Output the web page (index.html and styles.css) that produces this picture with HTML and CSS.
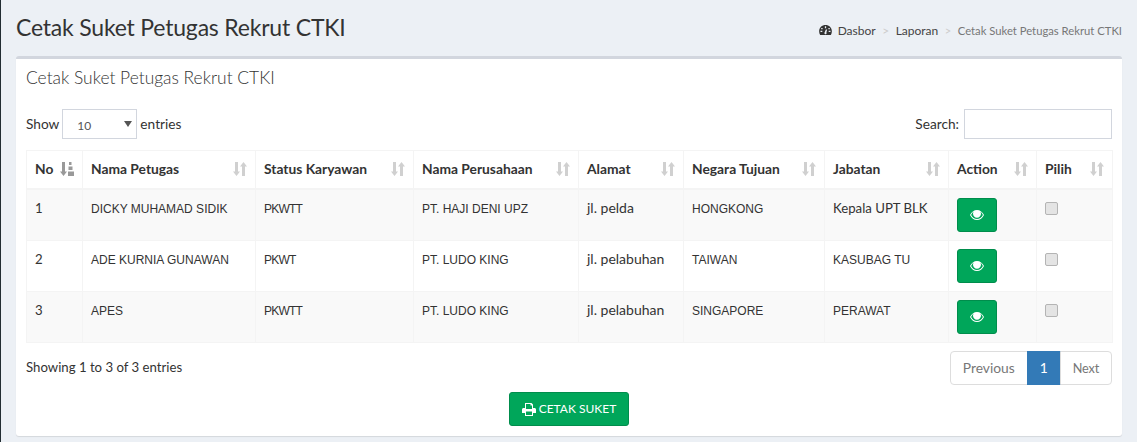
FILE: index.html
```html
<!DOCTYPE html>
<html lang="en">
<head>
    <meta charset="UTF-8">
    <meta name="viewport" content="width=device-width, initial-scale=1.0">
    <title>Cetak Suket Petugas Rekrut CTKI</title>
    <link rel="stylesheet" href="styles.css">
</head>
<body>
    <svg class="defs" width="0" height="0">
        <symbol id="sort" viewBox="0 0 14 14">
            <path d="M2 0h3v9.500h2L3.500 14 0 9.500h2z"/>
            <path d="M10.500 0L14 4.500h-2V14H9V4.500H7z"/>
        </symbol>
        <symbol id="sort-asc" viewBox="0 0 14 14">
            <path d="M2 0h3v9.500h2L3.500 14 0 9.500h2z"/>
            <path d="M9 0h2.500v3H9zM8.500 4.500h4v3.500h-4zM8 9.500h6V14H8z"/>
        </symbol>
        <symbol id="eye" viewBox="0 0 14 10">
            <path fill-rule="evenodd" d="M7 0c3 0 5.600 2 7 5-1.400 3-4 5-7 5S1.400 8 0 5c1.400-3 4-5 7-5zM3.600 1.700C2.500 2.400 1.700 3.600 1.100 5c1.300 2.500 3.400 4 5.900 4s4.600-1.500 5.900-4c-.6-1.400-1.400-2.600-2.500-3.300.4.600.6 1.300.6 2 0 2.200-1.800 4-4 4s-4-1.800-4-4c0-.7.200-1.400.6-2z"/>
        </symbol>
    </svg>

    <div class="wrapper">
        <header class="page-header">
            <h1>Cetak Suket Petugas Rekrut CTKI</h1>
            <ol class="breadcrumb">
                <li>
                    <svg class="icon-dash" viewBox="0 0 14 11"><path fill-rule="evenodd" d="M7 0c3.900 0 7 3 7 7 0 1.500-.4 2.900-1.100 4H1.100C.4 9.900 0 8.500 0 7c0-4 3.100-7 7-7zM6.300 1.500v2h1.400v-2zM2.300 3.300v1.500h1.500V3.300zM10.200 3.300v1.500h1.500V3.300zM1.500 6.300v1.400h2V6.300zM10.500 6.300v1.400h2V6.300zM6 8.200a1.200 1.200 0 1 0 2 0l.8-3.200h-1.400z"/></svg>
                    <a href="#">Dasbor</a>
                </li>
                <li><a href="#">Laporan</a></li>
                <li class="active">Cetak Suket Petugas Rekrut CTKI</li>
            </ol>
        </header>

        <section class="box">
            <h3 class="box-title">Cetak Suket Petugas Rekrut CTKI</h3>
            <div class="box-body">
                <div class="table-controls">
                    <label class="control">Show
                        <span class="select-wrap">
                            <select>
                                <option>10</option>
                                <option>25</option>
                            </select>
                        </span>
                        entries</label>
                    <label class="control control-search">Search: <input type="search"></label>
                </div>

                <table class="data-table">
                    <colgroup>
                        <col class="c-no"><col class="c-nama"><col class="c-status"><col class="c-pt">
                        <col class="c-alamat"><col class="c-negara"><col class="c-jabatan"><col class="c-action"><col class="c-pilih">
                    </colgroup>
                    <thead>
                        <tr>
                            <th><div class="th-inner">No <svg class="sort-icon sort-active"><use href="#sort-asc"/></svg></div></th>
                            <th><div class="th-inner">Nama Petugas <svg class="sort-icon"><use href="#sort"/></svg></div></th>
                            <th><div class="th-inner">Status Karyawan <svg class="sort-icon"><use href="#sort"/></svg></div></th>
                            <th><div class="th-inner">Nama Perusahaan <svg class="sort-icon"><use href="#sort"/></svg></div></th>
                            <th><div class="th-inner">Alamat <svg class="sort-icon"><use href="#sort"/></svg></div></th>
                            <th><div class="th-inner">Negara Tujuan <svg class="sort-icon"><use href="#sort"/></svg></div></th>
                            <th><div class="th-inner">Jabatan <svg class="sort-icon"><use href="#sort"/></svg></div></th>
                            <th><div class="th-inner">Action <svg class="sort-icon"><use href="#sort"/></svg></div></th>
                            <th><div class="th-inner">Pilih <svg class="sort-icon"><use href="#sort"/></svg></div></th>
                        </tr>
                    </thead>
                    <tbody>
                        <tr>
                            <td class="mixed">1</td>
                            <td>DICKY MUHAMAD SIDIK</td>
                            <td class="tight">PKWTT</td>
                            <td>PT. HAJI DENI UPZ</td>
                            <td class="lower">jl. pelda</td>
                            <td>HONGKONG</td>
                            <td class="mixed">Kepala UPT BLK</td>
                            <td><a class="btn btn-eye" href="#"><svg class="icon-eye"><use href="#eye"/></svg></a></td>
                            <td><input class="check" type="checkbox"></td>
                        </tr>
                        <tr>
                            <td class="mixed">2</td>
                            <td>ADE KURNIA GUNAWAN</td>
                            <td class="tight">PKWT</td>
                            <td>PT. LUDO KING</td>
                            <td class="lower">jl. pelabuhan</td>
                            <td>TAIWAN</td>
                            <td>KASUBAG TU</td>
                            <td><a class="btn btn-eye" href="#"><svg class="icon-eye"><use href="#eye"/></svg></a></td>
                            <td><input class="check" type="checkbox"></td>
                        </tr>
                        <tr>
                            <td class="mixed">3</td>
                            <td>APES</td>
                            <td class="tight">PKWTT</td>
                            <td>PT. LUDO KING</td>
                            <td class="lower">jl. pelabuhan</td>
                            <td>SINGAPORE</td>
                            <td>PERAWAT</td>
                            <td><a class="btn btn-eye" href="#"><svg class="icon-eye"><use href="#eye"/></svg></a></td>
                            <td><input class="check" type="checkbox"></td>
                        </tr>
                    </tbody>
                </table>

                <div class="table-footer">
                    <div class="info">Showing 1 to 3 of 3 entries</div>
                    <ul class="pagination">
                        <li><a href="#">Previous</a></li>
                        <li class="active"><a href="#">1</a></li>
                        <li><a href="#">Next</a></li>
                    </ul>
                </div>

                <div class="actions">
                    <a class="btn btn-print" href="#">
                        <svg class="icon-print" viewBox="0 0 14 13"><path fill-rule="evenodd" d="M3 0h6.500L11 1.500V5h1.500c.8 0 1.500.7 1.500 1.500V10h-3v3H3v-3H0V6.500C0 5.700.7 5 1.500 5H3zM4 1v5h6V2.500H8.500V1zM4 8.500V12h6V8.500z"/></svg>
                        CETAK SUKET
                    </a>
                </div>
            </div>
        </section>
    </div>
</body>
</html>
```

FILE: styles.css
```css
* {
    box-sizing: border-box;
}

html, body {
    height: 100%;
    overflow: hidden;
}

body {
    font-family: 'Lato', 'Noto Sans', sans-serif;
    font-size: 14px;
    line-height: 20px;
    color: #333;
    background-color: #ecf0f5;
    margin: 0;
}

a {
    text-decoration: none;
    color: inherit;
}

.defs {
    position: absolute;
}

.wrapper {
    height: 100%;
    border-left: 1px solid #222d32;
    padding: 0 15px;
}

.page-header {
    display: flex;
    justify-content: space-between;
    align-items: center;
    height: 56px;
    padding-bottom: 3px;
}

h1 {
    margin: 0;
    font-size: 23px;
    font-weight: 400;
    line-height: 26px;
    letter-spacing: -0.2px;
    color: #333;
}

.breadcrumb {
    display: flex;
    align-items: center;
    list-style: none;
    margin: 0;
    padding: 8px 0 0;
    font-size: 12px;
    color: #444;
}

.breadcrumb li + li::before {
    content: ">";
    color: #ccc;
    padding: 0 6.5px;
}

.breadcrumb .active {
    font-size: 11.25px;
    color: #777;
}

.icon-dash {
    width: 13px;
    height: 10px;
    fill: #333;
    margin-right: 3px;
}

.box {
    background-color: #fff;
    border-top: 3px solid #d2d6de;
    border-radius: 3px;
    box-shadow: 0 1px 1px rgba(0,0,0,0.1);
    height: 380px;
}

.box-title {
    margin: 0;
    padding: 9px 10px 0;
    font-size: 17.4px;
    font-weight: 300;
    line-height: 20px;
    color: #333;
}

.box-body {
    padding: 21px 10px 10px;
}

.table-controls {
    display: flex;
    justify-content: space-between;
    align-items: center;
    height: 30px;
    margin-bottom: 11px;
    font-size: 13.7px;
}

.control {
    display: flex;
    align-items: center;
    gap: 3px;
    line-height: 28px;
}

.control-search {
    gap: 5px;
}

.select-wrap {
    position: relative;
    display: block;
}

.select-wrap::after {
    content: "";
    position: absolute;
    right: 5px;
    top: 12px;
    border: 4px solid transparent;
    border-top: 6px solid #555;
    border-bottom: 0;
}

select {
    appearance: none;
    width: 75px;
    height: 30px;
    padding: 3px 14px 0;
    font-family: inherit;
    font-size: 12px;
    color: #555;
    background-color: #fff;
    border: 1px solid #d2d6de;
    border-radius: 0;
}

input[type="search"] {
    width: 148px;
    height: 30px;
    border: 1px solid #d2d6de;
    background-color: #fff;
}

.data-table {
    width: 1086px;
    table-layout: fixed;
    border-collapse: collapse;
}

.c-no { width: 56px; }
.c-nama { width: 173px; }
.c-status { width: 158px; }
.c-pt { width: 165px; }
.c-alamat { width: 105px; }
.c-negara { width: 141px; }
.c-jabatan { width: 124px; }
.c-action { width: 88px; }
.c-pilih { width: 76px; }

.data-table th, .data-table td {
    border: 1px solid #f4f4f4;
    padding: 8px;
    text-align: left;
    vertical-align: top;
}

.data-table th {
    border-bottom-width: 2px;
    padding-bottom: 9px;
    font-size: 13.8px;
    font-weight: 700;
}

.data-table td {
    height: 51px;
    font-family: 'Liberation Sans', sans-serif;
    font-size: 12px;
    line-height: 22px;
}

.data-table td.tight {
    letter-spacing: -0.8px;
}

.data-table td.lower {
    font-family: 'Lato', sans-serif;
    font-size: 14px;
    line-height: 20px;
}

.data-table td.mixed {
    font-family: 'Lato', sans-serif;
    font-size: 13.2px;
    line-height: 20px;
}

.data-table tbody tr:nth-child(odd) {
    background-color: #f9f9f9;
}

.th-inner {
    display: flex;
    justify-content: space-between;
    align-items: center;
}

.sort-icon {
    width: 14px;
    height: 14px;
    fill: #d0d0d0;
    flex: none;
}

.sort-active {
    fill: #999;
}

.btn {
    display: inline-flex;
    align-items: center;
    justify-content: center;
    color: #fff;
    background-color: #00a65a;
    border: 1px solid #008d4c;
    border-radius: 3px;
}

.btn-eye {
    width: 40px;
    height: 34px;
    vertical-align: top;
}

.icon-eye {
    width: 14px;
    height: 10px;
    fill: #fff;
}

.check {
    appearance: none;
    display: block;
    width: 13px;
    height: 13px;
    margin: 4px 0 0;
    background-color: #e4e4e4;
    border: 1px solid #b4b4b4;
    border-radius: 2px;
}

.table-footer {
    display: flex;
    justify-content: space-between;
    align-items: flex-start;
    margin-top: 8px;
}

.info {
    padding-top: 6px;
    font-size: 13.2px;
}

.pagination {
    display: flex;
    list-style: none;
    margin: 0;
    padding: 0;
    height: 34px;
    font-size: 13.8px;
    color: #777;
}

.pagination a {
    display: block;
    height: 34px;
    padding: 6px 12px;
    background-color: #fff;
    border: 1px solid #ddd;
    margin-left: -1px;
}

.pagination li:first-child a {
    margin-left: 0;
    border-radius: 4px 0 0 4px;
}

.pagination li:last-child a {
    font-size: 12.7px;
    letter-spacing: -0.2px;
    border-radius: 0 4px 4px 0;
}

.pagination .active a {
    color: #fff;
    background-color: #337ab7;
    border-color: #337ab7;
}

.actions {
    display: flex;
    justify-content: center;
    margin-top: 7px;
}

.btn-print {
    gap: 3px;
    width: 120px;
    height: 34px;
    font-size: 12px;
}

.icon-print {
    width: 14px;
    height: 13px;
    fill: #fff;
}
```
